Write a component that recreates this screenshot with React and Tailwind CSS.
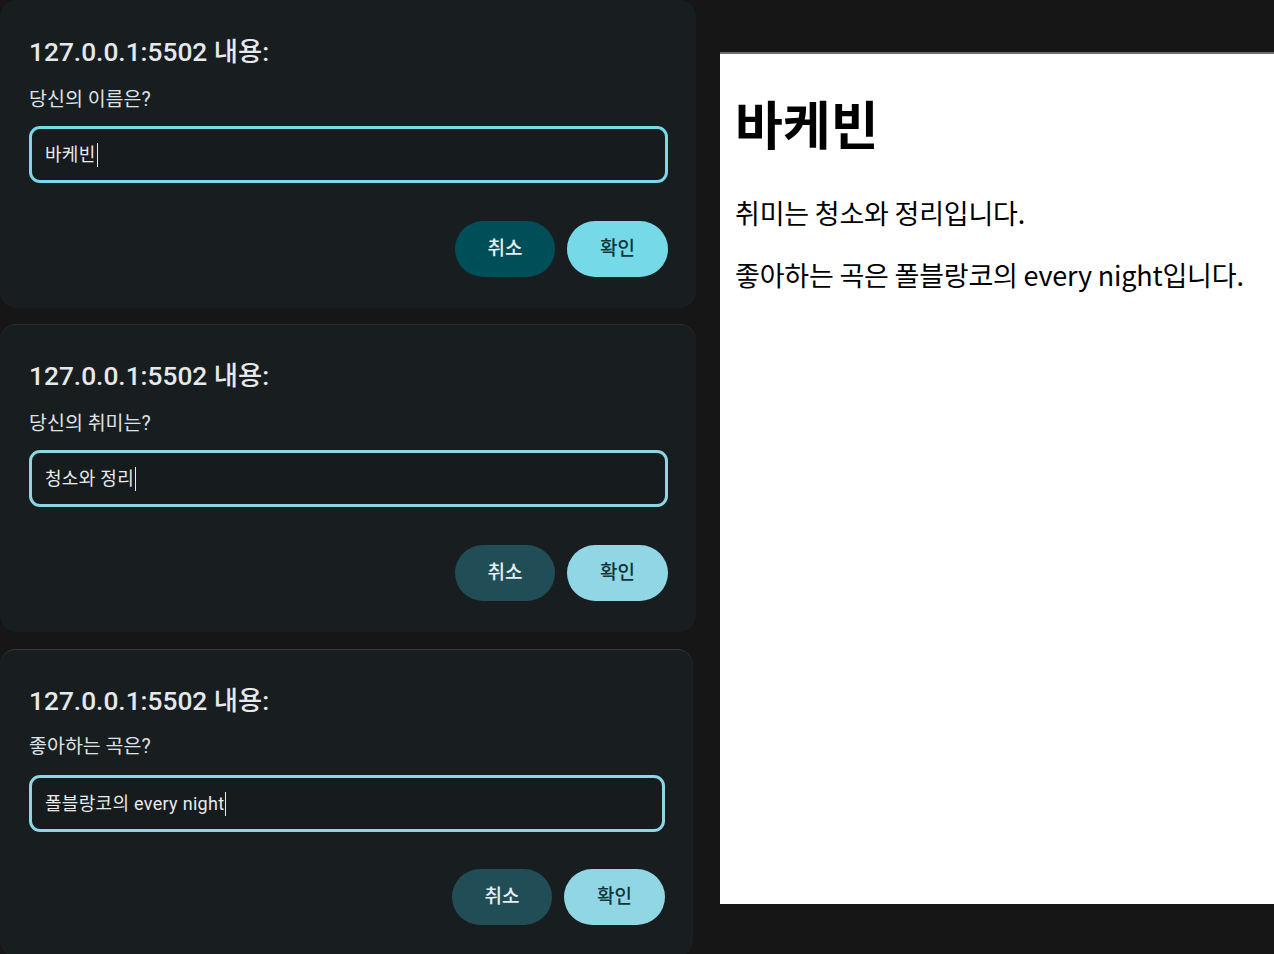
import React from "react";

const dialogs = [
  {
    q: "당신의 이름은?",
    v: "바케빈",
    w: "w-[696px]",
    mt: "",
    border: "border-[#78d9eb]",
    cancel: "bg-[#004f58]",
    ok: "bg-[#76d9e8]",
    top: "pt-[36px]",
    gapQ: "mt-[20px]",
    gapIn: "mt-[14px]",
    gapBtn: "mt-[38px]",
  },
  {
    q: "당신의 취미는?",
    v: "청소와 정리",
    w: "w-[696px]",
    mt: "mt-[16px]",
    border: "border-[#8ed5e6]",
    cancel: "bg-[#214e56]",
    ok: "bg-[#90d6e5]",
    top: "border-t border-[#2c2c2c] pt-[35px]",
    gapQ: "mt-[20px]",
    gapIn: "mt-[14px]",
    gapBtn: "mt-[38px]",
  },
  {
    q: "좋아하는 곡은?",
    v: "폴블랑코의 every night",
    w: "w-[693px]",
    mt: "mt-[17px]",
    border: "border-[#8ed5e6]",
    cancel: "bg-[#214e56]",
    ok: "bg-[#90d6e5]",
    top: "border-t border-[#3a3a3a] pt-[35px]",
    gapQ: "mt-[18px]",
    gapIn: "mt-[16px]",
    gapBtn: "mt-[37px]",
  },
];

const sans = "font-['Roboto','Noto_Sans_CJK_KR',sans-serif]";

function Dialog({ d }) {
  return (
    <div
      className={`${d.w} ${d.mt} ${d.top} shrink-0 h-[308px] rounded-[16px] bg-[#181d20] pl-[29px] pr-[28px] pb-[30px] flex flex-col ${sans}`}
    >
      <div className="h-[32px] leading-[32px] text-[26.3px] font-medium text-[#e6e8ea]">
        127.0.0.1:5502 내용:
      </div>
      <div className={`${d.gapQ} h-[24px] leading-[24px] text-[19.5px] text-[#dfe2e4]`}>
        {d.q}
      </div>
      <div
        className={`${d.gapIn} h-[57px] rounded-[11px] border-[3px] ${d.border} bg-[#161b1e] flex items-center pl-[13px]`}
      >
        <span className="text-[18px] text-[#e8eaec] tracking-[0.3px]">{d.v}</span>
        <span className="ml-[1px] w-[1px] h-[24px] bg-[#e8eaec]" />
      </div>
      <div className={`${d.gapBtn} flex justify-end gap-[12px]`}>
        <button
          className={`w-[100px] h-[56px] rounded-full ${d.cancel} text-[19px] font-medium text-[#e6eef0]`}
        >
          취소
        </button>
        <button
          className={`w-[101px] h-[56px] rounded-full ${d.ok} text-[19px] font-medium text-[#12343a]`}
        >
          확인
        </button>
      </div>
    </div>
  );
}

export default function App() {
  return (
    <div className="w-[1274px] h-[954px] overflow-hidden bg-[#161616] flex">
      <div className="w-[697px] shrink-0 flex flex-col">
        {dialogs.map((d, i) => (
          <Dialog key={i} d={d} />
        ))}
      </div>
      <div className="ml-[23px] mt-[52px] w-[554px] h-[852px] border-t-2 border-[#6e6e6e] bg-white pl-[15px] font-['Noto_Sans_CJK_KR',sans-serif] text-black">
        <h1 className="mt-[39px] text-[52px] leading-[60px] font-bold">바케빈</h1>
        <p className="mt-[43px] text-[27px] leading-[34px] tracking-[-0.2px]">취미는 청소와 정리입니다.</p>
        <p className="mt-[28px] text-[27px] leading-[34px] tracking-[-0.2px]">
          좋아하는 곡은 폴블랑코의 every night입니다.
        </p>
      </div>
    </div>
  );
}
